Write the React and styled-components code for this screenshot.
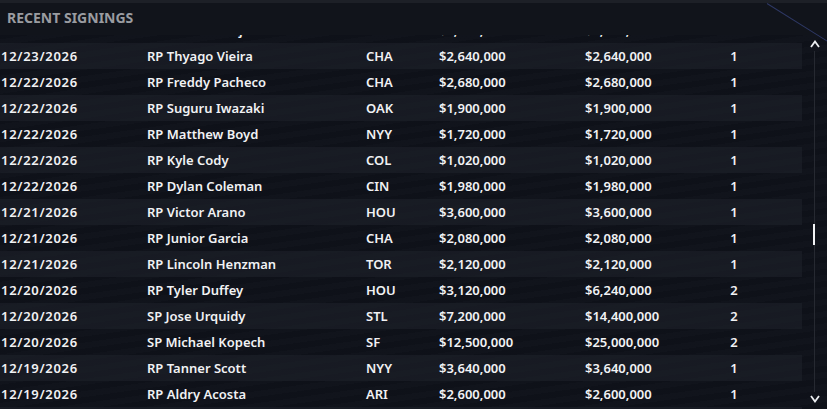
import React, { useEffect, useRef } from "react";
import styled, { createGlobalStyle } from "styled-components";

const GlobalStyle = createGlobalStyle`
  html, body {
    margin: 0;
    padding: 0;
    background: #0e1118;
  }
  * { box-sizing: border-box; }
`;

const signings = [
  ["12/24/2026", "RP Shintaro Fujinami", "CHA", "$2,640,000", "$2,640,000", "1"],
  ["12/23/2026", "RP Thyago Vieira", "CHA", "$2,640,000", "$2,640,000", "1"],
  ["12/22/2026", "RP Freddy Pacheco", "CHA", "$2,680,000", "$2,680,000", "1"],
  ["12/22/2026", "RP Suguru Iwazaki", "OAK", "$1,900,000", "$1,900,000", "1"],
  ["12/22/2026", "RP Matthew Boyd", "NYY", "$1,720,000", "$1,720,000", "1"],
  ["12/22/2026", "RP Kyle Cody", "COL", "$1,020,000", "$1,020,000", "1"],
  ["12/22/2026", "RP Dylan Coleman", "CIN", "$1,980,000", "$1,980,000", "1"],
  ["12/21/2026", "RP Victor Arano", "HOU", "$3,600,000", "$3,600,000", "1"],
  ["12/21/2026", "RP Junior Garcia", "CHA", "$2,080,000", "$2,080,000", "1"],
  ["12/21/2026", "RP Lincoln Henzman", "TOR", "$2,120,000", "$2,120,000", "1"],
  ["12/20/2026", "RP Tyler Duffey", "HOU", "$3,120,000", "$6,240,000", "2"],
  ["12/20/2026", "SP Jose Urquidy", "STL", "$7,200,000", "$14,400,000", "2"],
  ["12/20/2026", "SP Michael Kopech", "SF", "$12,500,000", "$25,000,000", "2"],
  ["12/19/2026", "RP Tanner Scott", "NYY", "$3,640,000", "$3,640,000", "1"],
  ["12/19/2026", "RP Aldry Acosta", "ARI", "$2,600,000", "$2,600,000", "1"],
  ["12/18/2026", "RP Jake Cousins", "MIL", "$1,500,000", "$1,500,000", "1"],
];

const App = () => {
  const listRef = useRef(null);

  useEffect(() => {
    if (listRef.current) listRef.current.scrollTop = 18;
  }, []);

  return (
    <Panel>
      <GlobalStyle />
      <Title>RECENT SIGNINGS</Title>
      <Body>
        <List ref={listRef}>
          {signings.map((s, i) => (
            <Row key={i} $striped={i % 2 === 1}>
              <Cell $spaced>{s[0]}</Cell>
              <Cell>{s[1]}</Cell>
              <Cell>{s[2]}</Cell>
              <Cell>{s[3]}</Cell>
              <Cell>{s[4]}</Cell>
              <Cell $center>{s[5]}</Cell>
            </Row>
          ))}
        </List>
        <Scrollbar>
          <Arrow>
            <svg width="10" height="8" viewBox="0 0 10 8">
              <path d="M1 7 L5 1.5 L9 7" fill="none" stroke="#eceef1" strokeWidth="1.8" />
            </svg>
          </Arrow>
          <Track>
            <Thumb />
          </Track>
          <Arrow>
            <svg width="10" height="8" viewBox="0 0 10 8">
              <path d="M1 1 L5 6.5 L9 1" fill="none" stroke="#eceef1" strokeWidth="1.8" />
            </svg>
          </Arrow>
        </Scrollbar>
      </Body>
    </Panel>
  );
};

export default App;

const Panel = styled.div`
  width: 827px;
  height: 409px;
  position: relative;
  overflow: hidden;
  font-family: "Noto Sans", "Open Sans", sans-serif;
  color: #f1f2f4;
  background:
    repeating-linear-gradient(
      172deg,
      rgba(255, 255, 255, 0.008) 0px,
      rgba(255, 255, 255, 0.008) 6px,
      rgba(0, 0, 0, 0.04) 6px,
      rgba(0, 0, 0, 0.04) 12px
    ),
    #0f121a;
  border-top: 3px solid #1d2027;
  display: flex;
  flex-direction: column;

  &::after {
    content: "";
    position: absolute;
    top: 0;
    left: 767px;
    width: 90px;
    height: 1px;
    transform-origin: left center;
    transform: rotate(32deg);
    background: rgba(70, 85, 160, 0.55);
  }
`;

const Title = styled.div`
  height: 32px;
  padding: 5px 0 0 7px;
  font-size: 14px;
  font-weight: 700;
  color: #9a9ca1;
  background: #11141b;
`;

const Body = styled.div`
  flex: 1;
  display: flex;
  min-height: 0;
`;

const List = styled.div`
  width: 802px;
  overflow: hidden;
`;

const Row = styled.div`
  height: 26px;
  display: grid;
  grid-template-columns: 146px 219px 73px 146px 133px 32px;
  align-items: center;
  padding-left: 1px;
  font-size: 13px;
  font-weight: 600;
  background: ${(p) => (p.$striped ? "rgba(30, 33, 41, 0.6)" : "transparent")};
`;

const Cell = styled.div`
  white-space: nowrap;
  text-align: ${(p) => (p.$center ? "center" : "left")};
  letter-spacing: ${(p) => (p.$spaced ? "0.7px" : "normal")};
`;

const Scrollbar = styled.div`
  width: 25px;
  display: flex;
  flex-direction: column;
  align-items: center;
  padding: 5px 0 6px;
  gap: 3px;
`;

const Arrow = styled.div`
  height: 8px;
  display: flex;
  svg { display: block; }
`;

const Track = styled.div`
  flex: 1;
  width: 1px;
  background: #262931;
  position: relative;
`;

const Thumb = styled.div`
  position: absolute;
  left: -1px;
  top: 173px;
  width: 2px;
  height: 21px;
  background: #f2f3f5;
`;
